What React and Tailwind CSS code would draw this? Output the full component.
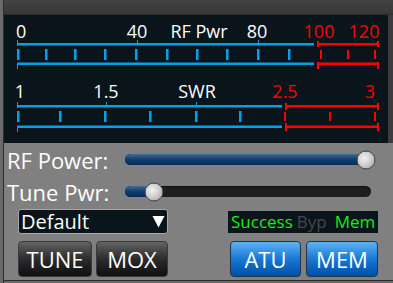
import React from "react";

const BLUE = "#00a2e8";
const RED = "#ff0000";

function Meters() {
  const rfBlueTicks = [18, 46, 75, 105, 136, 167, 197, 227, 258, 289];
  const rfRedTicks = [321, 348, 375];
  const swrBlueTicks = [18, 60, 105, 150, 196, 240];
  const swrRedTicks = [330, 375];
  return (
    <svg width="384" height="128" viewBox="4 15 384 128" className="block">
      <g fontFamily="'Open Sans', sans-serif" fontSize="18">
        <text x="16" y="38" fill="#fff">0</text>
        <text x="137" y="38" fill="#fff" textAnchor="middle">40</text>
        <text x="199" y="38" fill="#fff" textAnchor="middle">RF Pwr</text>
        <text x="257" y="38" fill="#fff" textAnchor="middle">80</text>
        <text x="319" y="38" fill={RED} textAnchor="middle">100</text>
        <text x="364" y="38" fill={RED} textAnchor="middle">120</text>

        <text x="20" y="98" fill="#fff" textAnchor="middle">1</text>
        <text x="106" y="98" fill="#fff" textAnchor="middle">1.5</text>
        <text x="197" y="98" fill="#fff" textAnchor="middle">SWR</text>
        <text x="285" y="98" fill={RED} textAnchor="middle">2.5</text>
        <text x="370" y="98" fill={RED} textAnchor="middle">3</text>
      </g>

      {/* RF Pwr meter */}
      <rect x="17" y="43" width="297" height="2.5" fill={BLUE} />
      <rect x="17" y="40" width="1" height="6" fill={BLUE} />
      <rect x="137" y="40" width="1" height="4" fill={BLUE} />
      <rect x="258" y="40" width="1" height="4" fill={BLUE} />
      {rfBlueTicks.map((x) => (
        <rect key={x} x={x - 1} y="49" width="2.5" height="11" fill={BLUE} />
      ))}
      {rfRedTicks.map((x) => (
        <rect key={x} x={x - 1} y="50" width="2" height="9" fill={RED} />
      ))}
      <rect x="17" y="62.5" width="297" height="2.5" fill={BLUE} />
      <rect x="17" y="63" width="1" height="6" fill={BLUE} />
      <rect x="317" y="43" width="62" height="2.5" fill={RED} />
      <rect x="317" y="41" width="2" height="6" fill={RED} />
      <rect x="377" y="41" width="2" height="6" fill={RED} />
      <rect x="317" y="62.5" width="62" height="2.5" fill={RED} />
      <rect x="317" y="62" width="2" height="7" fill={RED} />
      <rect x="377" y="62" width="2" height="7" fill={RED} />

      {/* SWR meter */}
      <rect x="17" y="105" width="265" height="2.5" fill={BLUE} />
      <rect x="17" y="102" width="1" height="6" fill={BLUE} />
      <rect x="106" y="102" width="1" height="4" fill={BLUE} />
      <rect x="196" y="102" width="1" height="4" fill={BLUE} />
      {swrBlueTicks.map((x) => (
        <rect key={x} x={x - 1} y="111" width="2.5" height="11" fill={BLUE} />
      ))}
      {swrRedTicks.map((x) => (
        <rect key={x} x={x - 1} y="112" width="2" height="9" fill={RED} />
      ))}
      <rect x="17" y="125.5" width="265" height="2.5" fill={BLUE} />
      <rect x="17" y="126" width="1" height="6" fill={BLUE} />
      <rect x="286" y="105" width="93" height="2.5" fill={RED} />
      <rect x="285" y="103" width="2" height="7" fill={RED} />
      <rect x="284" y="112" width="2" height="9" fill={RED} />
      <rect x="377" y="103" width="2" height="7" fill={RED} />
      <rect x="286" y="125.5" width="93" height="2.5" fill={RED} />
      <rect x="285" y="123" width="2" height="8" fill={RED} />
      <rect x="377" y="123" width="2" height="8" fill={RED} />
    </svg>
  );
}

function Slider({ value }) {
  return (
    <div className="relative w-[246px] h-[11px] rounded-full bg-[#1e1e1e] shadow-[inset_0_1px_1px_rgba(0,0,0,0.6)]">
      <div
        className="absolute left-0 top-0 h-full rounded-full bg-gradient-to-b from-[#3f6e9a] via-[#0f3d6c] to-[#0a2c52]"
        style={{ width: value + 4 }}
      />
      <div
        className="absolute top-1/2 w-[19px] h-[19px] -translate-x-1/2 -translate-y-1/2 rounded-full border border-[#4a4a4a] bg-[radial-gradient(circle_at_40%_40%,#f2f2f2_0%,#d0d0d0_45%,#9a9a9a_100%)]"
        style={{ left: value }}
      />
    </div>
  );
}

export default function App() {
  return (
    <div className="w-[393px] h-[283px] flex bg-[#6a6a6a] pl-[3px] font-['Open_Sans',sans-serif] overflow-hidden">
      <div className="flex flex-col flex-1 border-l border-[#2c2c2c]">
        <div className="flex flex-col bg-[#3c3c3c]">
          <div className="h-[15px] bg-gradient-to-b from-[#434343] to-[#383838] border-b border-[#2e2e2e]" />
          <div className="h-[128px] mr-[5px] bg-[#0a141b]">
            <Meters />
          </div>
        </div>
        <div className="h-[137px] flex flex-col bg-[#808080]">
          <div className="h-[33px] flex items-center">
            <span className="w-[121px] pl-[3px] text-[22px] leading-none text-white">RF Power:</span>
            <Slider value={241} />
          </div>
          <div className="h-[31px] flex items-center">
            <span className="w-[121px] pl-[3px] text-[22px] leading-none text-white">Tune Pwr:</span>
            <Slider value={29} />
          </div>
          <div className="mt-[2px] h-[25px] flex items-center pl-[14px]">
            <div className="w-[150px] h-[25px] flex items-center justify-between rounded-[3px] border border-[#a8a8a8] bg-[#0a141b] pl-[2px] pr-[2px]">
              <span className="text-[20px] leading-none text-white">Default</span>
              <svg width="13" height="13" viewBox="0 0 13 13">
                <polygon points="0.5,1 12.5,1 6.5,12.5" fill="#fff" />
              </svg>
            </div>
            <div className="ml-[60px] w-[150px] h-[22px] flex items-center bg-[#0a141b] pl-[3px] text-[17px] leading-none">
              <span className="text-[#12ee12]">Success</span>
              <span className="ml-[4px] text-[#474747]">Byp</span>
              <span className="ml-[8px] text-[#12ee12]">Mem</span>
            </div>
          </div>
          <div className="mt-[7px] h-[36px] flex pl-[14px]">
            <button className="w-[74px] h-[36px] rounded-[4px] border border-[#3a3a3a] bg-gradient-to-b from-[#646464] via-[#2c2c2c] to-[#0f0f0f] text-[22px] leading-none text-white">
              TUNE
            </button>
            <button className="ml-[4px] w-[72px] h-[36px] rounded-[4px] border border-[#3a3a3a] bg-gradient-to-b from-[#646464] via-[#2c2c2c] to-[#0f0f0f] text-[22px] leading-none text-white">
              MOX
            </button>
            <button className="ml-[62px] w-[71px] h-[36px] rounded-[4px] border border-[#1e3550] bg-gradient-to-b from-[#5ab4f4] via-[#1878d4] to-[#0050a6] text-[22px] leading-none text-white">
              ATU
            </button>
            <button className="ml-[5px] w-[72px] h-[36px] rounded-[4px] border border-[#1e3550] bg-gradient-to-b from-[#5ab4f4] via-[#1878d4] to-[#0050a6] text-[22px] leading-none text-white">
              MEM
            </button>
          </div>
        </div>
        <div className="h-[1px] bg-[#2c2c2c]" />
        <div className="h-[2px] bg-[#6a6a6a]" />
      </div>
    </div>
  );
}
